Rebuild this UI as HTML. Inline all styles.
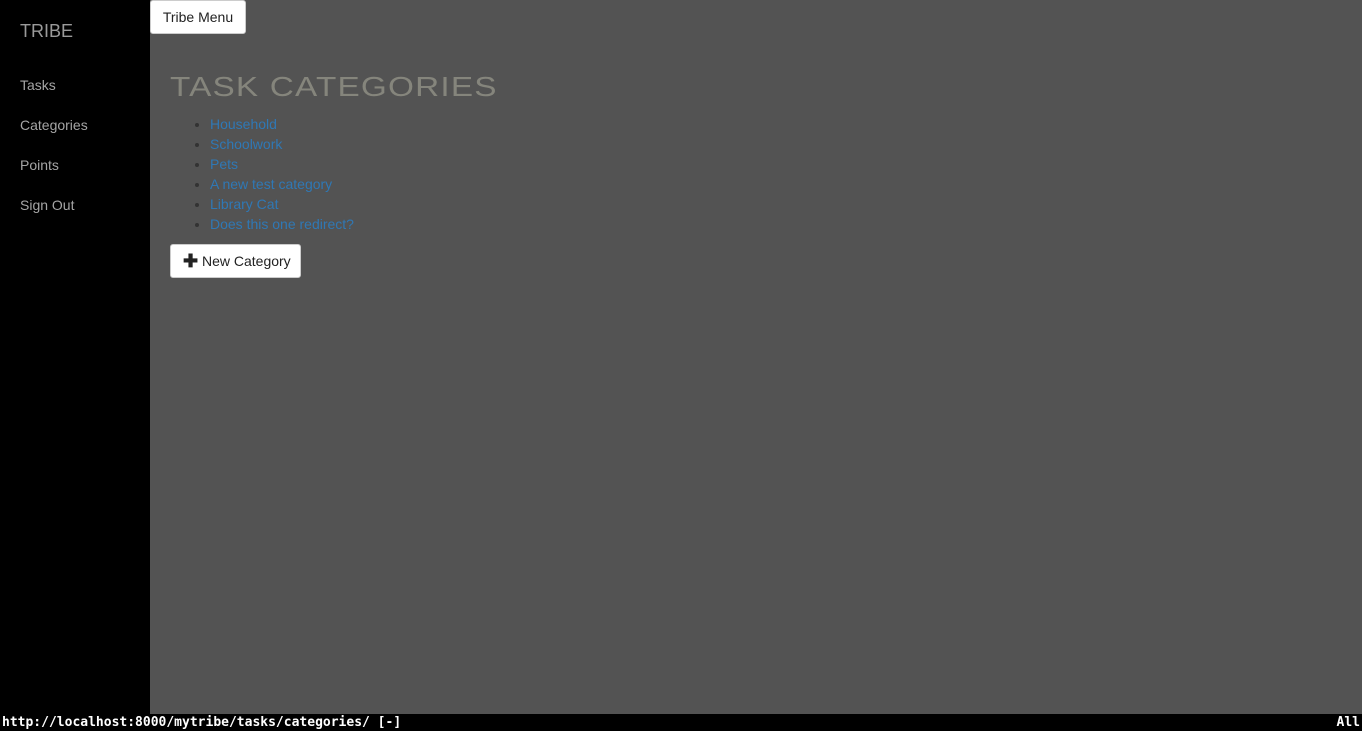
<!DOCTYPE html>
<html><head><style>
html,body{margin:0;padding:0;width:1362px;height:748px;overflow:hidden;background:#fff;font-family:"Liberation Sans",sans-serif}
#side{position:absolute;left:0;top:0;width:150px;height:714px;background:#000}
#main{position:absolute;left:150px;top:0;width:1212px;height:714px;background:#535353}
.brand{position:absolute;left:20px;top:21px;font-size:18px;color:#9a9a9a}
.nav{position:absolute;left:20px;font-size:14px;color:#a5a5a5}
.btn{position:absolute;background:#fff;border:1px solid #ccc;border-radius:3px;font-size:14px;color:#222;box-sizing:border-box}
h1{position:absolute;left:170px;top:72px;margin:0;font-weight:normal;font-size:28px;color:#85857c;transform:scaleX(1.19);transform-origin:left;letter-spacing:1px;line-height:30px;white-space:nowrap}
ul{position:absolute;left:170px;top:114px;margin:0;padding:0 0 0 40px;color:#333;font-size:14px;line-height:20px}
ul a{color:#2f78b5;text-decoration:none}
#status{position:absolute;left:0;top:714px;width:1362px;height:17px;background:#000;color:#fff;font-family:"DejaVu Sans Mono","Liberation Mono",monospace;font-weight:bold;font-size:13px;line-height:17px}
</style></head><body>
<div id="side"></div><div id="main"></div>
<div class="brand">TRIBE</div>
<div class="nav" style="top:77px">Tasks</div>
<div class="nav" style="top:117px">Categories</div>
<div class="nav" style="top:157px">Points</div>
<div class="nav" style="top:197px">Sign Out</div>
<div class="btn" style="left:150px;top:0;width:96px;height:34px;line-height:32px;text-align:center">Tribe Menu</div>
<h1>TASK CATEGORIES</h1>
<ul>
<li><a>Household</a></li><li><a>Schoolwork</a></li><li><a>Pets</a></li><li><a>A new test category</a></li><li><a>Library Cat</a></li><li><a>Does this one redirect?</a></li>
</ul>
<div class="btn" style="left:170px;top:244px;width:131px;height:34px;line-height:32px;padding-left:12px"><b style="font-size:18px;vertical-align:-1px">✚</b> New Category</div>
<div id="status"><span style="position:absolute;left:2px">http://localhost:8000/mytribe/tasks/categories/ [-]</span><span style="position:absolute;right:2px">All</span></div>
</body></html>
